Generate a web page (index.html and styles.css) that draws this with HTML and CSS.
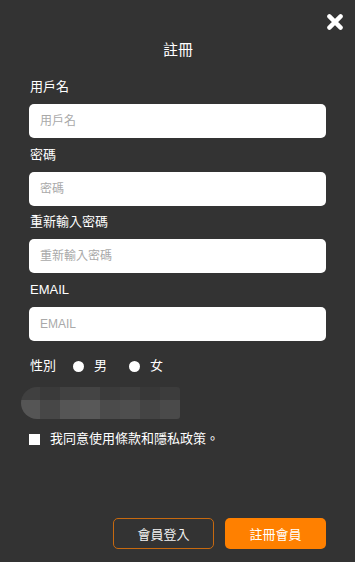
FILE: index.html
```html
<!DOCTYPE html>
<html lang="zh-Hant">
<head>
<meta charset="utf-8">
<title>註冊</title>
<link rel="stylesheet" href="styles.css">
</head>
<body>
<div class="modal">
  <button class="close" type="button" aria-label="close">
    <svg viewBox="0 0 16 16" width="16" height="16"><path d="M2.4 2.4 L13.6 13.6 M13.6 2.4 L2.4 13.6" stroke="#fff" stroke-width="4.4" stroke-linecap="round" fill="none"/></svg>
  </button>
  <h2 class="title">註冊</h2>
  <form class="form">
    <div class="field">
      <label class="label">用戶名</label>
      <input class="input" type="text" placeholder="用戶名">
    </div>
    <div class="field">
      <label class="label">密碼</label>
      <input class="input" type="password" placeholder="密碼">
    </div>
    <div class="field">
      <label class="label">重新輸入密碼</label>
      <input class="input" type="password" placeholder="重新輸入密碼">
    </div>
    <div class="field">
      <label class="label">EMAIL</label>
      <input class="input" type="text" placeholder="EMAIL">
    </div>
    <div class="gender">
      <span class="gender-label">性別</span>
      <label class="opt"><input class="radio" type="radio" name="g"><span>男</span></label>
      <label class="opt"><input class="radio" type="radio" name="g"><span>女</span></label>
    </div>
    <div class="captcha">
      <span class="cell c1"></span><span class="cell c2"></span><span class="cell c3"></span><span class="cell c4"></span>
      <span class="cell c5"></span><span class="cell c6"></span><span class="cell c7"></span><span class="cell c8"></span>
      <span class="cell d1"></span><span class="cell d2"></span><span class="cell d3"></span><span class="cell d4"></span>
      <span class="cell d5"></span><span class="cell d6"></span><span class="cell d7"></span><span class="cell d8"></span>
    </div>
    <label class="agree"><input class="check" type="checkbox"><span>我同意使用條款和隱私政策。</span></label>
    <div class="actions">
      <button class="btn btn-outline" type="button">會員登入</button>
      <button class="btn btn-primary" type="button">註冊會員</button>
    </div>
  </form>
</div>
</body>
</html>
```

FILE: styles.css
```css
html, body {
  margin: 0;
  padding: 0;
  background: #333333;
}
body {
  width: 355px;
  height: 562px;
  overflow: hidden;
  font-family: "Liberation Sans", "Noto Sans CJK TC", sans-serif;
  color: #ffffff;
}
.modal {
  position: relative;
  box-sizing: border-box;
  height: 562px;
  padding: 40px 29px 0 29px;
}
.close {
  position: absolute;
  top: 14px;
  left: 327px;
  width: 16px;
  height: 16px;
  padding: 0;
  border: 0;
  background: none;
  display: block;
}
.close svg { display: block; }
.title {
  margin: 0;
  font-size: 15px;
  line-height: 20px;
  font-weight: normal;
  text-align: center;
  padding-left: 1px;
}
.form {
  margin: 17px 0 0 0;
  display: flex;
  flex-direction: column;
}
.field {
  display: flex;
  flex-direction: column;
  margin-bottom: 6.5px;
}
.label {
  font-size: 13px;
  line-height: 20px;
  margin-bottom: 7px;
  padding-left: 1px;
}
.input {
  box-sizing: border-box;
  width: 297px;
  height: 34px;
  border: 0;
  border-radius: 5px;
  background: #ffffff;
  padding: 0 11px;
  font-family: "Liberation Sans", "Noto Sans CJK TC", sans-serif;
  font-size: 12px;
  color: #333;
  outline: none;
}
.input::placeholder { color: #a9a9a9; }
.gender {
  display: flex;
  align-items: center;
  margin-top: 9px;
  height: 20px;
  font-size: 13px;
  line-height: 20px;
  padding-left: 1px;
}
.gender-label { margin-right: 17px; }
.opt {
  display: flex;
  align-items: center;
  margin-right: 22px;
}
.radio {
  appearance: none;
  -webkit-appearance: none;
  width: 11px;
  height: 11px;
  margin: 0 10px 0 0;
  border-radius: 50%;
  background: #ffffff;
}
.captcha {
  margin: 11px 0 0 -8px;
  width: 159px;
  height: 32px;
  display: grid;
  grid-template-columns: 19px repeat(7, 20px);
  grid-template-rows: 13px 19px;
  border-radius: 16px 3px 3px 16px;
  overflow: hidden;
}
.cell { display: block; }
.c1 { background: #404040; }
.c2 { background: #3a3a3a; }
.c3 { background: #414141; }
.c4 { background: #444444; }
.c5 { background: #3b3b3b; }
.c6 { background: #3e3e3e; }
.c7 { background: #383838; }
.c8 { background: #3c3c3c; }
.d1 { background: #555555; }
.d2 { background: #474747; }
.d3 { background: #555555; }
.d4 { background: #585858; }
.d5 { background: #4b4b4b; }
.d6 { background: #4e4e4e; }
.d7 { background: #444444; }
.d8 { background: #4a4a4a; }
.agree {
  display: flex;
  align-items: center;
  margin-top: 10px;
  font-size: 13px;
  line-height: 20px;
}
.check {
  appearance: none;
  -webkit-appearance: none;
  width: 11px;
  height: 11px;
  margin: 0 10px 0 0;
  background: #ffffff;
  border-radius: 0;
}
.actions {
  display: flex;
  justify-content: flex-end;
  gap: 11px;
  margin-top: 69px;
}
.btn {
  box-sizing: border-box;
  width: 101px;
  height: 31px;
  border-radius: 5px;
  font-family: "Liberation Sans", "Noto Sans CJK TC", sans-serif;
  font-size: 13px;
  padding: 0;
  color: #f2f2f2;
}
.btn-outline {
  background: transparent;
  border: 1.5px solid #c7690f;
}
.btn-primary {
  background: #ff8000;
  border: 0;
  color: #ffffff;
}
```
